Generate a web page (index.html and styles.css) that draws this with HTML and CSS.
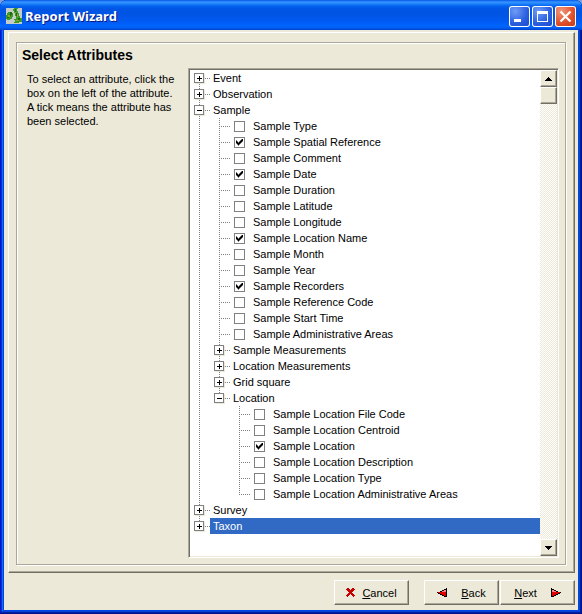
FILE: index.html
```html
<!DOCTYPE html>
<html lang="en">
<head>
<meta charset="utf-8">
<title>Report Wizard</title>
<link rel="stylesheet" href="styles.css">
</head>
<body>
<div class="window">
  <header class="titlebar">
    <svg class="app-icon" viewBox="0 0 16 16" shape-rendering="crispEdges" aria-hidden="true">
      <rect width="16" height="16" fill="#c3cdc6"/>
      <path fill="#3c9a2a" d="M2 4h4v1h1v4H6v2H4v1H1v-1H0V7h1V5h1zM8 0h4v1h-1v2h1v2h1v3h1v2h2v4h-3v1H8v-1h1v-2H8v-1h2V8H9V5H8V3H7V1h1z"/>
      <path fill="#1f6b14" d="M4 4h2v3H5v1H4zM9 1h1v3H9zM10 5h1v3h-1zM12 10h2v2h-2zM1 9h2v1H1z"/>
      <path fill="#93a326" d="M2 7h2v2H2zM11 6h1v3h-1zM10 12h3v1h-3zM9 4h1v1H9z"/>
    </svg>
    <h1 class="title">Report Wizard</h1>
    <div class="window-buttons">
      <button class="winbtn" type="button" aria-label="Minimize"><svg viewBox="0 0 21 21" shape-rendering="crispEdges"><path fill="#fff" d="M5 13h7v3H5z"/></svg></button>
      <button class="winbtn" type="button" aria-label="Maximize"><svg viewBox="0 0 21 21" shape-rendering="crispEdges"><path fill="#fff" fill-rule="evenodd" d="M5 5h11v11H5zM6 8v7h9V8z"/></svg></button>
      <button class="winbtn close" type="button" aria-label="Close"><svg viewBox="0 0 21 21"><path stroke="#fff" stroke-width="2.2" d="M5.500 5.500l10 10M15.500 5.500l-10 10"/></svg></button>
    </div>
  </header>
  <main class="client">
    <section class="page">
      <div class="frame">
        <h2 class="heading">Select Attributes</h2>
        <div class="columns">
          <p class="help">To select an attribute, click the box on the left of the attribute. A tick means the attribute has been selected.</p>
          <div class="treebox">
            <ul class="tree">
              <li><div class="row"><button class="toggle plus" type="button" aria-label="Expand Event"></button><span class="label">Event</span></div></li>
              <li><div class="row"><button class="toggle plus" type="button" aria-label="Expand Observation"></button><span class="label">Observation</span></div></li>
              <li><div class="row"><button class="toggle" type="button" aria-label="Collapse Sample"></button><span class="label">Sample</span></div>
                <ul>
                  <li><label class="row leaf"><input type="checkbox"><span class="label">Sample Type</span></label></li>
                  <li><label class="row leaf"><input type="checkbox" checked><span class="label">Sample Spatial Reference</span></label></li>
                  <li><label class="row leaf"><input type="checkbox"><span class="label">Sample Comment</span></label></li>
                  <li><label class="row leaf"><input type="checkbox" checked><span class="label">Sample Date</span></label></li>
                  <li><label class="row leaf"><input type="checkbox"><span class="label">Sample Duration</span></label></li>
                  <li><label class="row leaf"><input type="checkbox"><span class="label">Sample Latitude</span></label></li>
                  <li><label class="row leaf"><input type="checkbox"><span class="label">Sample Longitude</span></label></li>
                  <li><label class="row leaf"><input type="checkbox" checked><span class="label">Sample Location Name</span></label></li>
                  <li><label class="row leaf"><input type="checkbox"><span class="label">Sample Month</span></label></li>
                  <li><label class="row leaf"><input type="checkbox"><span class="label">Sample Year</span></label></li>
                  <li><label class="row leaf"><input type="checkbox" checked><span class="label">Sample Recorders</span></label></li>
                  <li><label class="row leaf"><input type="checkbox"><span class="label">Sample Reference Code</span></label></li>
                  <li><label class="row leaf"><input type="checkbox"><span class="label">Sample Start Time</span></label></li>
                  <li><label class="row leaf"><input type="checkbox"><span class="label">Sample Administrative Areas</span></label></li>
                  <li><div class="row"><button class="toggle plus" type="button" aria-label="Expand Sample Measurements"></button><span class="label">Sample Measurements</span></div></li>
                  <li><div class="row"><button class="toggle plus" type="button" aria-label="Expand Location Measurements"></button><span class="label">Location Measurements</span></div></li>
                  <li><div class="row"><button class="toggle plus" type="button" aria-label="Expand Grid square"></button><span class="label">Grid square</span></div></li>
                  <li><div class="row"><button class="toggle" type="button" aria-label="Collapse Location"></button><span class="label">Location</span></div>
                    <ul>
                      <li><label class="row leaf"><input type="checkbox"><span class="label">Sample Location File Code</span></label></li>
                      <li><label class="row leaf"><input type="checkbox"><span class="label">Sample Location Centroid</span></label></li>
                      <li><label class="row leaf"><input type="checkbox" checked><span class="label">Sample Location</span></label></li>
                      <li><label class="row leaf"><input type="checkbox"><span class="label">Sample Location Description</span></label></li>
                      <li><label class="row leaf"><input type="checkbox"><span class="label">Sample Location Type</span></label></li>
                      <li><label class="row leaf"><input type="checkbox"><span class="label">Sample Location Administrative Areas</span></label></li>
                    </ul>
                  </li>
                </ul>
              </li>
              <li><div class="row"><button class="toggle plus" type="button" aria-label="Expand Survey"></button><span class="label">Survey</span></div></li>
              <li><div class="row"><button class="toggle plus" type="button" aria-label="Expand Taxon"></button><span class="label selected">Taxon</span></div></li>
            </ul>
            <div class="scrollbar">
              <button class="raised arrow" type="button" aria-label="Scroll up"><svg viewBox="0 0 7 4" shape-rendering="crispEdges"><path d="M3 0h1v1h1v1h1v1h1v1H0V3h1V2h1V1h1z"/></svg></button>
              <div class="raised thumb"></div>
              <button class="raised arrow down" type="button" aria-label="Scroll down"><svg viewBox="0 0 7 4" shape-rendering="crispEdges"><path d="M0 0h7v1H6v1H5v1H4v1H3V3H2V2H1V1H0z"/></svg></button>
            </div>
          </div>
        </div>
      </div>
    </section>
    <footer class="actions">
      <button class="raised action cancel" type="button"><svg class="cross" viewBox="0 0 9 9" shape-rendering="crispEdges"><path fill="#c80000" d="M0 1h1V0h2v1h1v1h1V1h1V0h2v1h1v1H8v1H7v1H6v1h1v1h1v1h1v1H8v1H7V8H6V7H5V6H4v1H3v1H2v1H1V8H0V7h1V6h1V5h1V4H2V3H1V2H0z"/></svg><span><u>C</u>ancel</span></button>
      <button class="raised action" type="button"><svg class="tri" viewBox="0 0 10 9" shape-rendering="crispEdges"><path fill="#e00000" d="M9 0v8H7V7H5V6H3V5H1V4h2V3h2V2h2V1h2z"/><path fill="#ff8080" d="M9 2v2H4V3h2V2z"/><path d="M9 0h1v9H7V8H5V7H3V6H1V5H0V4h1v1h2v1h2v1h2v1h2zM7 1h2v1H7zM5 2h2v1H5zM3 3h2v1H3z"/></svg><span><u>B</u>ack</span></button>
      <button class="raised action next" type="button"><span><u>N</u>ext</span><svg class="tri" viewBox="0 0 10 9" shape-rendering="crispEdges"><path fill="#e00000" d="M1 0v8h2V7h2V6h2V5h2V4H7V3H5V2H3V1H1z"/><path fill="#ff8080" d="M1 2v2h5V3H4V2z"/><path d="M1 0H0v9h3V8h2V7h2V6h2V5h1V4H9v1H7v1H5v1H3v1H1zM3 1H1v1h2zM5 2H3v1h2zM7 3H5v1h2z"/></svg></button>
    </footer>
  </main>
</div>
</body>
</html>
```

FILE: styles.css
```css
* { box-sizing: border-box; }

body {
  margin: 0;
  background: #7f9fd8;
  color: #000;
  font: 11px/14px "Liberation Sans", Arial, sans-serif;
}

ul, p, h1, h2 { margin: 0; padding: 0; list-style: none; }
svg { display: block; }

button {
  margin: 0;
  padding: 0;
  border: 0;
  color: inherit;
  font: inherit;
}

.window {
  display: flex;
  flex-direction: column;
  min-height: 100vh;
  padding: 0 4px 4px;
  border-radius: 7px 7px 0 0;
  background: #0046e0;
  box-shadow: inset -1px -1px #00138c, inset 1px 0 #0019cf, inset -2px -2px #001ea0, inset 2px 0 #0831d9, inset -3px -3px #0441d8, inset 3px 0 #166aee;
}

.titlebar {
  display: flex;
  align-items: center;
  height: 30px;
  margin: 0 -4px;
  padding: 2px 6px 0;
  border-radius: 7px 7px 0 0;
  background: linear-gradient(#0058e6 0, #3a93ff 2px, #288eff 3px, #0363ee 6px, #0055e5 9px, #0055e5 16px, #005bf5 22px, #0066ff 26px, #005df0 28px, #0040cc 30px);
}

.app-icon { width: 16px; height: 16px; }

.title {
  flex: 1;
  margin-left: 3px;
  color: #fff;
  font: bold 13px/16px "Noto Sans", sans-serif;
  text-shadow: 1px 1px #0a1883;
}

.window-buttons { display: flex; gap: 2px; }

.winbtn {
  width: 21px;
  height: 21px;
  border-radius: 3px;
  background: radial-gradient(circle at 30% 25%, #6f9cf5, #2a5fe0 55%, #1a47c8);
  box-shadow: inset 0 0 0 1px #fff;
}

.winbtn.close { background: radial-gradient(circle at 30% 25%, #f0997c, #e0502b 55%, #c03812); }

.client {
  display: flex;
  flex: 1;
  flex-direction: column;
  background: #ece9d8;
}

.page {
  display: flex;
  flex: 1;
  margin: 2px 3px 0 4px;
  padding: 9px 8px 7px 7px;
  border: 1px solid;
  border-color: #fff #716f64 #716f64 #fff;
  box-shadow: inset -1px -1px #aca899;
}

.frame {
  display: flex;
  flex: 1;
  flex-direction: column;
  padding: 4px 6px 6px 5px;
  border: 1px solid #aca899;
  box-shadow: inset 1px 1px #fff, 1px 1px #fff;
}

.heading { font-size: 14px; line-height: 16px; }

.columns { display: flex; flex: 1; margin-top: 5px; }

.help { width: 156px; padding: 4px 0 0 5px; margin-right: 10px; }

.treebox {
  display: flex;
  flex: 1;
  border: 1px solid;
  border-color: #aca899 #fff #fff #aca899;
  background: #fff;
  box-shadow: inset 1px 1px #716f64, inset -1px -1px #ece9d8;
}

.tree { flex: 1; padding: 1px 0 0 5px; }
.tree ul { padding-left: 20px; }
.tree li { position: relative; }

/* vertical connector running down the siblings */
.tree li::before {
  content: "";
  position: absolute;
  top: 0;
  bottom: 0;
  left: 5px;
  width: 1px;
  background: repeating-linear-gradient(#808080 0 1px, #fff 1px 2px);
}

.tree > li:first-child::before { top: 8px; }
.tree li:last-child::before { bottom: auto; height: 8px; }

.row { position: relative; display: flex; align-items: center; height: 16px; }

/* horizontal connector from the trunk to the item */
.row::before {
  content: "";
  position: absolute;
  top: 8px;
  left: 5px;
  width: 11px;
  height: 1px;
  background: repeating-linear-gradient(90deg, #808080 0 1px, #fff 1px 2px);
}

.toggle {
  position: relative;
  width: 10px;
  height: 10px;
  margin-right: 6px;
  border: 1px solid #808080;
  background: linear-gradient(#000, #000) 2px 4px / 5px 1px no-repeat, #fff;
  box-shadow: 1px 1px #ece9d8;
}

.toggle.plus {
  background: linear-gradient(#000, #000) 2px 4px / 5px 1px no-repeat, linear-gradient(#000, #000) 4px 2px / 1px 5px no-repeat, #fff;
}

.label { padding-left: 3px; line-height: 16px; white-space: nowrap; }
.label.selected { flex: 1; background: #316ac5; color: #fff; }

.leaf input {
  display: grid;
  place-content: center;
  appearance: none;
  width: 11px;
  height: 11px;
  margin: 0 5px 0 20px;
  border: 1px solid #808080;
  background: #fff;
}

.leaf input:checked::after {
  content: "";
  width: 7px;
  height: 7px;
  background: #000;
  clip-path: polygon(0 2px, 1px 2px, 1px 3px, 2px 3px, 2px 4px, 3px 4px, 3px 3px, 4px 3px, 4px 2px, 5px 2px, 5px 1px, 6px 1px, 6px 0, 7px 0, 7px 3px, 6px 3px, 6px 4px, 5px 4px, 5px 5px, 4px 5px, 4px 6px, 3px 6px, 3px 7px, 2px 7px, 2px 6px, 1px 6px, 1px 5px, 0 5px);
}

.scrollbar {
  display: flex;
  flex-direction: column;
  width: 17px;
  margin: 1px 1px 1px 0;
  background: repeating-conic-gradient(#ece9d8 0 25%, #fff 0 50%) 0 0 / 2px 2px;
}

.raised {
  background: #ece9d8;
  border: 1px solid;
  border-color: #fff #716f64 #716f64 #fff;
  box-shadow: inset -1px -1px #aca899;
}

.arrow { display: grid; place-items: center; height: 17px; }
.arrow svg { width: 7px; height: 4px; }
.thumb { height: 17px; }
.down { margin-top: auto; }

.actions { display: flex; justify-content: flex-end; padding: 7px 3px 5px; gap: 1px; }

.action { display: flex; align-items: center; justify-content: center; width: 75px; height: 25px; gap: 14px; }
.cancel { gap: 7px; margin-right: 14px; }
.cross { width: 9px; height: 9px; }
.tri { width: 10px; height: 9px; }
```
